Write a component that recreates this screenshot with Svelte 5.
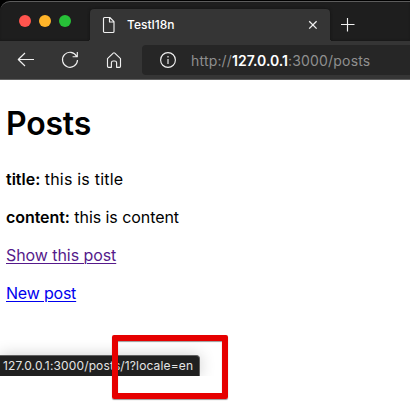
<script>
  const lights = ['#ff544e', '#ffb429', '#27c138'];
</script>

<div class="window">
  <header>
    <div class="tabs">
      <div class="lights">
        {#each lights as color}<i style="background:{color}"></i>{/each}
      </div>
      <div class="tab">
        <svg class="file" width="14" height="18" viewBox="0 0 14 18"><path d="M2.5 1.5h5.3l4.2 4.2v9.8a1 1 0 0 1-1 1H2.5a1 1 0 0 1-1-1v-13a1 1 0 0 1 1-1zM7.5 1.7v4.3h4.3" /></svg>
        <span class="name">TestI18n</span>
        <svg class="close" width="10" height="10" viewBox="0 0 10 10"><path d="M1.2 1.2l7.4 7.4M8.6 1.2L1.2 8.6" /></svg>
        <span class="foot left"></span>
        <span class="foot right"></span>
      </div>
      <svg class="plus" width="16" height="16" viewBox="0 0 16 16"><path d="M1 7.5h13.5M7.5 1v13.5" /></svg>
    </div>
    <div class="toolbar">
      <svg class="back" width="18" height="16" viewBox="0 0 18 16"><path d="M17 7.5H1.5M8 1L1.3 7.5L8 14" /></svg>
      <svg class="reload" width="18" height="18" viewBox="0 0 18 18"><path d="M15.7 5.4A7.5 7.5 0 1 0 16.5 9M16.3 1v4.7h-4.7" /></svg>
      <svg class="home" width="16" height="18" viewBox="0 0 16 18"><path d="M1.5 7.6L7.2 2.1a1.2 1.2 0 0 1 1.6 0l5.7 5.5v7.7a1 1 0 0 1-1 1h-2.9v-4.5a1.8 1.8 0 0 0-1.8-1.8H7.2a1.8 1.8 0 0 0-1.8 1.8v4.5H2.5a1 1 0 0 1-1-1z" /></svg>
      <div class="address">
        <svg width="18" height="18" viewBox="0 0 18 18"><circle cx="9" cy="9" r="7.4" /><path d="M9 8v5M9 5v1.5" /></svg>
        <span class="url">http://<b>127.0.0.1</b>:3000/posts</span>
      </div>
    </div>
  </header>
  <main>
    <h1>Posts</h1>
    <p class="title"><strong>title:</strong> <span>this is title</span></p>
    <p class="content"><strong>content:</strong> <span>this is content</span></p>
    <p class="show"><a class="visited" href="#show">Show this post</a></p>
    <p class="new"><a href="#new">New post</a></p>
  </main>
  <div class="status-clip"><div class="status">127.0.0.1:3000/posts/1?locale=en</div></div>
  <div class="mark"></div>
</div>

<style>
  :global(body) { margin: 0; background: #000; overflow: hidden; }
  .window {
    position: relative;
    width: 410px;
    height: 403px;
    overflow: hidden;
    background: #fff;
    font-family: Inter, "Liberation Sans", sans-serif;
  }
  svg { flex: none; fill: none; stroke: #f0f0f0; stroke-width: 1.15; stroke-linejoin: round; }
  header { height: 80px; box-sizing: border-box; background: #000; padding-top: 1px; border-bottom: 1px solid #606060; }
  .tabs {
    display: flex;
    height: 40px;
    box-sizing: border-box;
    background: #1e1e1e;
    border-top: 1px solid #5c5c5c;
    border-top-left-radius: 10px;
    padding-top: 7px;
    box-shadow: inset 0 -1px 2px #191919;
  }
  .lights { display: flex; gap: 8px; width: 71px; padding: 6px 0 0 19px; }
  .lights i { width: 12px; height: 12px; border-radius: 50%; }
  .tab {
    position: relative;
    display: flex;
    align-items: center;
    width: 240px;
    height: 32px;
    box-sizing: border-box;
    padding: 0 12px;
    border-radius: 4px 4px 0 0;
    background: #353535;
    box-shadow: 0 0 3px #111;
    clip-path: inset(-4px -4px 0 -4px);
  }
  .foot { position: absolute; bottom: 0; width: 3px; height: 3px; }
  .foot.left { left: -3px; background: radial-gradient(circle at 0 0, transparent 3px, #353535 3px); }
  .foot.right { right: -3px; background: radial-gradient(circle at 100% 0, transparent 3px, #353535 3px); }
  .name { margin-left: 11px; color: #fff; font-size: 12px; font-weight: 500; line-height: 16px; }
  .close { margin-left: auto; stroke-width: 1.3; }
  .plus { margin: 8px 0 0 10px; }
  .toolbar {
    display: flex;
    align-items: flex-start;
    height: 38px;
    box-sizing: border-box;
    padding: 4px 0 0 17px;
    background: #353535;
  }
  .back { margin-top: 7px; }
  .reload { margin: 6px 0 0 26px; }
  .home { margin: 6px 0 0 27px; }
  .address {
    display: flex;
    align-items: center;
    flex: 1;
    height: 30px;
    margin-left: 20px;
    padding-left: 17px;
    border-radius: 4px 0 0 4px;
    background: #262626;
  }
  .url { margin-left: 14px; color: #8f8f8f; font-size: 14px; letter-spacing: .18px; white-space: nowrap; }
  .url b { color: #fff; font-weight: 600; letter-spacing: 0; }
  main { padding: 24px 6px 0; color: #000; font-size: 16px; }
  h1 { margin: 0; font-size: 32px; line-height: 40px; font-weight: 600; letter-spacing: -.2px; }
  p { margin: 0 0 18px; line-height: 20px; white-space: nowrap; }
  h1 + p { margin-top: 25px; }
  strong { font-weight: 600; }
  .title span { letter-spacing: .2px; }
  .content { letter-spacing: -.06px; }
  .show { letter-spacing: -.07px; }
  .new { letter-spacing: -.2px; }
  a { color: #0000ee; text-decoration: underline; text-decoration-thickness: 1px; text-underline-offset: 2px; text-decoration-skip-ink: auto; }
  a.visited { color: #551a8b; }
  .status-clip { position: absolute; left: 0; top: 335px; width: 230px; height: 41px; overflow: hidden; }
  .status {
    width: 200px;
    height: 21px;
    margin-top: 20px;
    box-sizing: border-box;
    padding-left: 3px;
    border-top: 1px solid #606060;
    border-right: 1px solid #606060;
    border-top-right-radius: 4px;
    background: #202020;
    box-shadow: 0 0 16px rgba(0, 0, 0, .2);
    color: #e4e4e4;
    font-size: 12px;
    letter-spacing: .14px;
    line-height: 20px;
    white-space: nowrap;
  }
  .mark {
    position: absolute;
    left: 112px;
    top: 335px;
    width: 116px;
    height: 64px;
    box-sizing: border-box;
    border: 6px solid #e60000;
    border-radius: 2px;
    box-shadow: 0 1px 1px rgba(0, 0, 0, .4), inset 0 1px 1px rgba(0, 0, 0, .4);
  }
</style>
